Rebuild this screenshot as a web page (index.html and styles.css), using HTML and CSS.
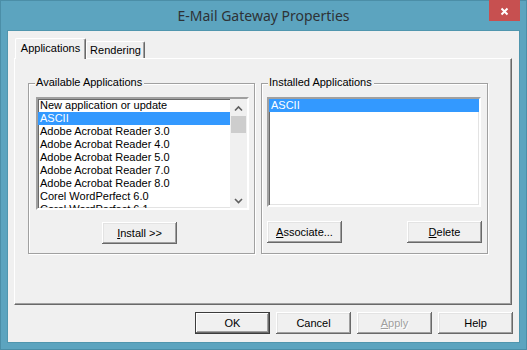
FILE: index.html
```html
<!DOCTYPE html>
<html>
<head>
<meta charset="utf-8">
<title>E-Mail Gateway Properties</title>
<link rel="stylesheet" href="styles.css">
</head>
<body>
<div class="window">
  <div class="titlebar">
    <span class="title">E-Mail Gateway Properties</span>
    <div class="close">
      <svg width="31" height="21" viewBox="0 0 31 21"><path d="M12.5 8.5 L18.5 14.5 M18.5 8.5 L12.5 14.5" stroke="#fff" stroke-width="2" fill="none"/></svg>
    </div>
  </div>
  <div class="client">
    <div class="tabs">
      <div class="tab active">Applications</div>
      <div class="tab">Rendering</div>
    </div>
    <div class="panel">
      <div class="group group-avail">
        <span class="legend">Available Applications</span>
        <div class="listbox list-avail">
          <div class="items">
            <div class="item">New application or update</div>
            <div class="item selected">ASCII</div>
            <div class="item">Adobe Acrobat Reader 3.0</div>
            <div class="item">Adobe Acrobat Reader 4.0</div>
            <div class="item">Adobe Acrobat Reader 5.0</div>
            <div class="item">Adobe Acrobat Reader 7.0</div>
            <div class="item">Adobe Acrobat Reader 8.0</div>
            <div class="item">Corel WordPerfect 6.0</div>
            <div class="item">Corel WordPerfect 6.1</div>
          </div>
          <div class="scrollbar">
            <div class="sb-btn"><svg width="17" height="17" viewBox="0 0 17 17"><path d="M5 11.5 L8.5 8 L12 11.5" stroke="#606060" stroke-width="1.6" fill="none"/></svg></div>
            <div class="sb-thumb"></div>
            <div class="sb-track"></div>
            <div class="sb-btn"><svg width="17" height="17" viewBox="0 0 17 17"><path d="M5 8 L8.5 11.5 L12 8" stroke="#606060" stroke-width="1.6" fill="none"/></svg></div>
          </div>
        </div>
        <div class="row-install">
          <button class="btn"><u>I</u>nstall &gt;&gt;</button>
        </div>
      </div>
      <div class="group group-inst">
        <span class="legend">Installed Applications</span>
        <div class="listbox list-inst">
          <div class="items">
            <div class="item selected">ASCII</div>
          </div>
        </div>
        <div class="row-assoc">
          <button class="btn"><u>A</u>ssociate...</button>
          <button class="btn"><u>D</u>elete</button>
        </div>
      </div>
    </div>
    <div class="actions">
      <button class="btn default">OK</button>
      <button class="btn">Cancel</button>
      <button class="btn disabled"><u>A</u>pply</button>
      <button class="btn">Help</button>
    </div>
  </div>
</div>
</body>
</html>
```
FILE: styles.css
```css
html, body {
  margin: 0;
  padding: 0;
  background: #5ca4bf;
}
.window {
  width: 527px;
  height: 350px;
  background: #5ca4bf;
  box-shadow: inset 0 0 0 1px #4b8ea7;
  display: flex;
  flex-direction: column;
  font-family: "Liberation Sans", Arial, sans-serif;
  font-size: 11px;
  color: #000;
}
.titlebar {
  position: relative;
  height: 31px;
  display: flex;
  justify-content: center;
  align-items: center;
}
.title {
  font-family: "Noto Sans", "Open Sans", sans-serif;
  font-size: 14px;
  color: #2e3236;
  margin-top: -1px;
}
.close {
  position: absolute;
  top: 0;
  right: 7px;
  width: 31px;
  height: 21px;
  background: #c75050;
}
.close svg { display: block; }
.client {
  margin: 0 8px;
  height: 311px;
  background: #f0f0f0;
  box-shadow: 0 0 0 1px #5096ae;
  box-sizing: border-box;
  padding: 7px 6px 0 6px;
  display: flex;
  flex-direction: column;
}
.tabs {
  display: flex;
  align-items: flex-end;
  height: 20px;
  padding-left: 1px;
}
.tab {
  box-sizing: border-box;
  height: 17px;
  padding: 2px 0 0 0;
  line-height: 13px;
  text-align: center;
  border-top: 1px solid #fff;
  border-left: 1px solid #fff;
  border-right: 1px solid #696969;
  box-shadow: inset -1px 0 0 #a0a0a0;
  border-radius: 2px 2px 0 0;
  background: #f0f0f0;
  width: 59px;
}
.tab.active {
  width: 71px;
  height: 21px;
  padding-top: 3px;
  margin-bottom: -1px;
  position: relative;
  z-index: 1;
}
.panel {
  box-sizing: border-box;
  width: 498px;
  height: 247px;
  border-top: 1px solid #fff;
  border-left: 1px solid #fff;
  border-right: 1px solid #696969;
  border-bottom: 1px solid #696969;
  box-shadow: inset -1px -1px 0 #a0a0a0;
  display: flex;
  align-items: flex-start;
  gap: 6px;
  padding: 24px 0 0 13px;
}
.group {
  position: relative;
  box-sizing: border-box;
  width: 227px;
  height: 171px;
  border: 1px solid #a0a0a0;
  box-shadow: inset 1px 1px 0 #fff, 1px 1px 0 #fff;
  display: flex;
  flex-direction: column;
  align-items: flex-start;
}
.legend {
  position: absolute;
  top: -8px;
  left: 6px;
  padding: 0 2px 0 1px;
  background: #f0f0f0;
  line-height: 13px;
  white-space: nowrap;
}
.listbox {
  box-sizing: border-box;
  background: #fff;
  border: 2px solid;
  border-color: #a0a0a0 #fff #fff #a0a0a0;
  box-shadow: inset 1px 1px 0 #696969, inset -1px -1px 0 #e3e3e3;
  display: flex;
  overflow: hidden;
}
.list-avail {
  margin: 13px 0 0 7px;
  width: 213px;
  height: 113px;
}
.list-inst {
  margin: 13px 0 0 5px;
  width: 214px;
  height: 110px;
}
.items {
  flex: 1;
  overflow: hidden;
  padding-top: 0;
  min-width: 0;
}
.item {
  line-height: 13px;
  height: 13px;
  padding-left: 2px;
  white-space: nowrap;
}
.item.selected {
  background: #3399ff;
  color: #fff;
}
.scrollbar {
  width: 17px;
  flex: none;
  display: flex;
  flex-direction: column;
  background: #f0f0f0;
}
.sb-btn {
  height: 17px;
  flex: none;
}
.sb-btn svg { display: block; }
.sb-thumb {
  height: 17px;
  margin: 0 1px;
  background: #cdcdcd;
  flex: none;
}
.sb-track { flex: 1; }
.btn {
  box-sizing: border-box;
  width: 75px;
  height: 22px;
  padding: 0;
  margin: 0;
  font-family: "Liberation Sans", Arial, sans-serif;
  font-size: 11px;
  color: #000;
  background: #f0f0f0;
  border: none;
  border-radius: 0;
  box-shadow: inset -1px -1px 0 #696969, inset 1px 1px 0 #fff, inset -2px -2px 0 #a0a0a0, inset 2px 2px 0 #e3e3e3;
  text-align: center;
}
.btn u { text-decoration: underline; text-underline-offset: 1px; }
.btn.default {
  box-shadow: inset 0 0 0 1px #3c3c3c, inset -2px -2px 0 #696969, inset 2px 2px 0 #fff, inset -3px -3px 0 #a0a0a0;
}
.btn.disabled {
  color: #a0a0a0;
  text-shadow: 1px 1px 0 #fff;
}
.row-install {
  margin: 12px 0 0 73px;
}
.row-assoc {
  margin: 14px 0 0 5px;
  width: 215px;
  display: flex;
  justify-content: space-between;
}
.actions {
  margin-top: 7px;
  display: flex;
  justify-content: flex-end;
  gap: 6px;
}
```
